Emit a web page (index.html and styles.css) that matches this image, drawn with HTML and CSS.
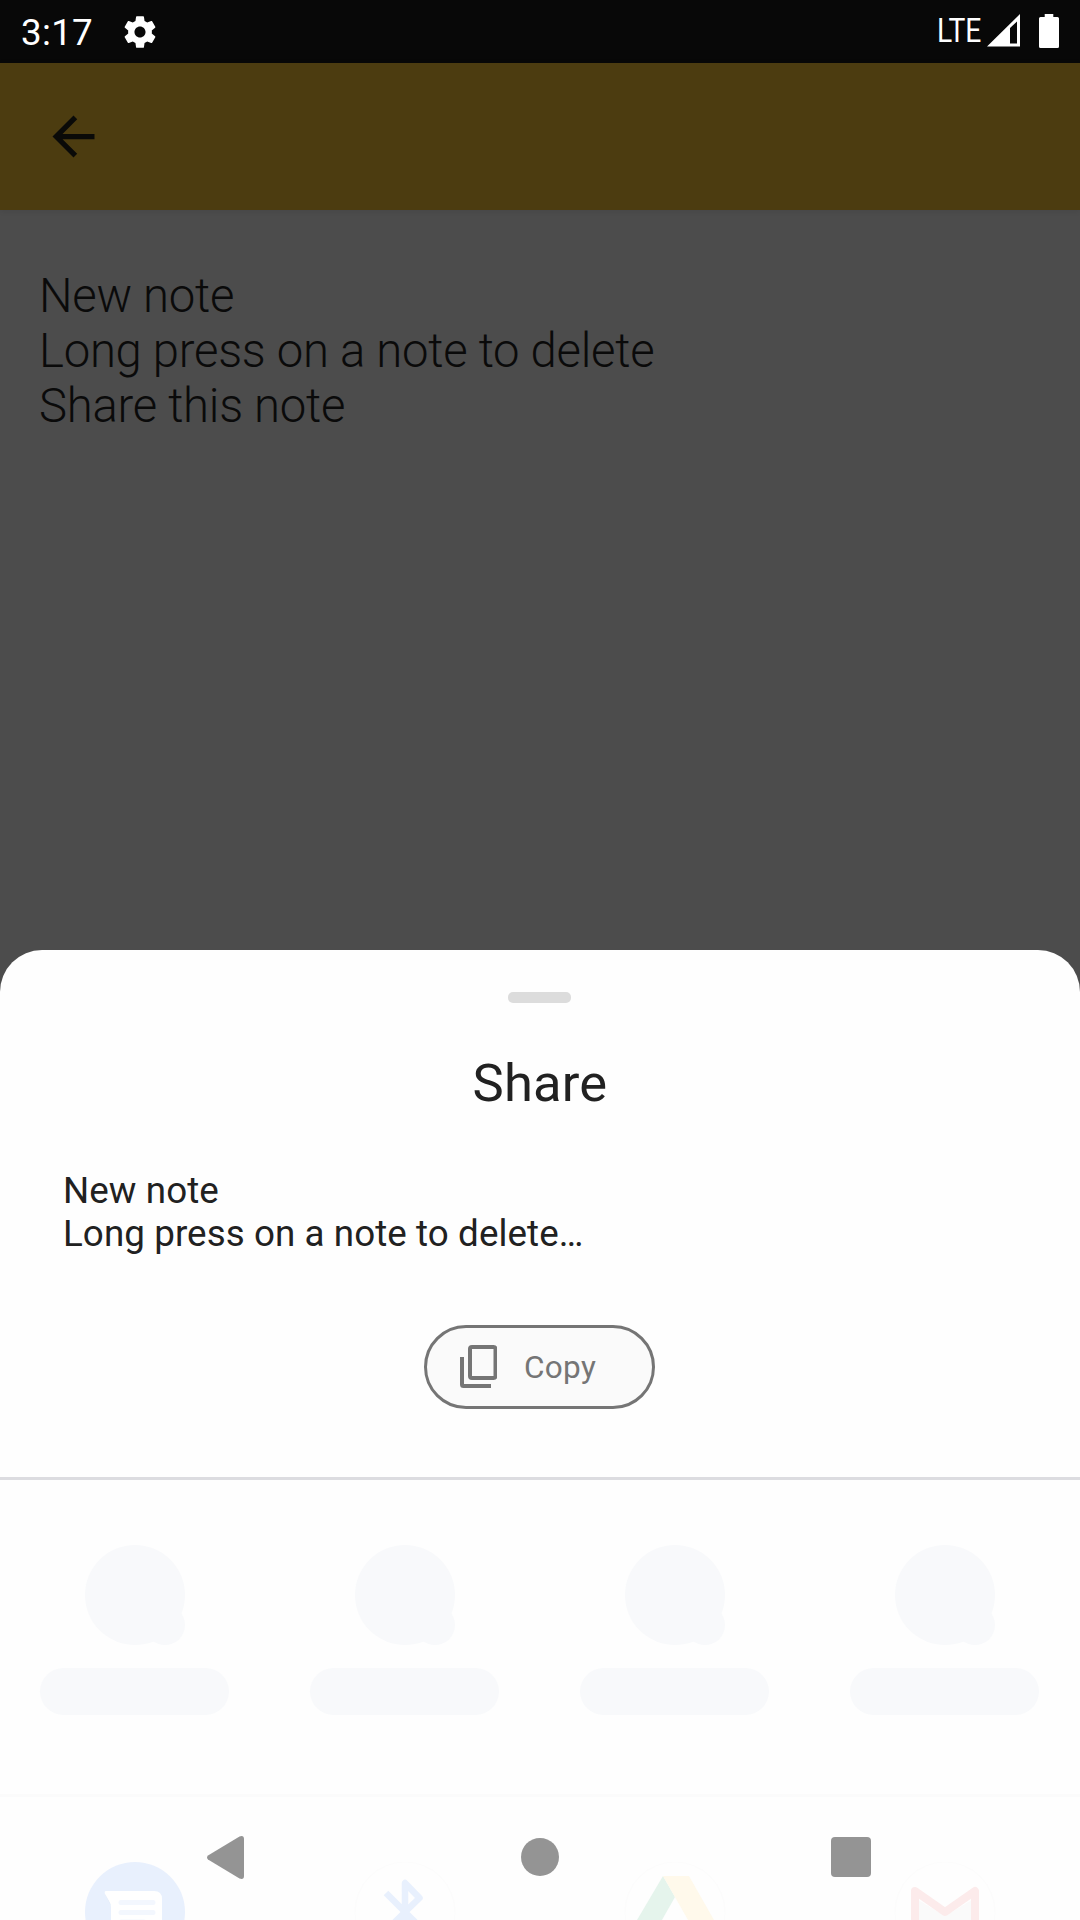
FILE: index.html
```html
<!DOCTYPE html>
<html lang="en">
<head>
<meta charset="utf-8">
<title>Share note</title>
<link rel="stylesheet" href="styles.css">
</head>
<body>
<div class="screen">
  <header class="status">
    <span class="time">3:17</span>
    <svg class="gear" width="38" height="38" viewBox="0 0 24 24"><path fill="#fff" d="M19.43 12.98c.04-.32.07-.64.07-.98s-.03-.66-.07-.98l2.11-1.65c.19-.15.24-.42.12-.64l-2-3.46c-.12-.22-.39-.3-.61-.22l-2.49 1c-.52-.4-1.08-.73-1.69-.98l-.38-2.65C14.46 2.18 14.25 2 14 2h-4c-.25 0-.46.18-.49.42l-.38 2.65c-.61.25-1.17.59-1.69.98l-2.49-1c-.23-.09-.49 0-.61.22l-2 3.46c-.13.22-.07.49.12.64l2.11 1.65c-.04.32-.07.65-.07.98s.03.66.07.98l-2.11 1.65c-.19.15-.24.42-.12.64l2 3.46c.12.22.39.3.61.22l2.49-1c.52.4 1.08.73 1.69.98l.38 2.65c.03.24.24.42.49.42h4c.25 0 .46-.18.49-.42l.38-2.65c.61-.25 1.17-.59 1.69-.98l2.49 1c.23.09.49 0 .61-.22l2-3.46c.12-.22.07-.49-.12-.64l-2.11-1.65zM12 15.5c-1.93 0-3.5-1.57-3.5-3.5s1.57-3.5 3.5-3.5 3.5 1.57 3.5 3.5-1.57 3.5-3.5 3.5z"/></svg>
    <span class="lte">LTE</span>
    <svg class="signal" width="33" height="33" viewBox="0 0 33 33"><path fill="#fff" fill-rule="evenodd" d="M0 32.500 33 0V32.500zM23 14V29.500H30V7.500z"/></svg>
    <svg class="battery" width="20" height="34" viewBox="0 0 20 34"><path fill="#fff" d="M5.700 0H14.300V3H18.500Q20 3 20 4.500V32.500Q20 34 18.500 34H1.500Q0 34 0 32.500V4.500Q0 3 1.500 3H5.700z"/></svg>
  </header>
  <div class="appbar">
    <svg width="63" height="63" viewBox="0 0 24 24"><path fill="#0a0a08" d="M20 11H7.830l5.590-5.590L12 4l-8 8 8 8 1.410-1.410L7.830 13H20v-2z"/></svg>
  </div>
  <main class="note">New note<br>Long press on a note to delete<br>Share this note</main>

  <section class="sheet">
    <div class="handle"></div>
    <h1 class="title">Share</h1>
    <p class="preview">New note<br>Long press on a note to delete…</p>
    <div class="actions">
      <button class="chip">
        <svg width="37" height="43" viewBox="0 0 37 43"><g fill="none" stroke="#757575" stroke-width="4"><rect x="10" y="2" width="25.500" height="31" rx="2"/><path d="M2 12V39.500Q2 41 3.500 41H31"/></g></svg>
        <span>Copy</span>
      </button>
    </div>
    <div class="targets">
      <div class="target"><svg width="100" height="100"><circle cx="50" cy="50" r="50"/><circle cx="80" cy="80" r="20"/></svg><span class="pill"></span></div>
      <div class="target"><svg width="100" height="100"><circle cx="50" cy="50" r="50"/><circle cx="80" cy="80" r="20"/></svg><span class="pill"></span></div>
      <div class="target"><svg width="100" height="100"><circle cx="50" cy="50" r="50"/><circle cx="80" cy="80" r="20"/></svg><span class="pill"></span></div>
      <div class="target"><svg width="100" height="100"><circle cx="50" cy="50" r="50"/><circle cx="80" cy="80" r="20"/></svg><span class="pill"></span></div>
    </div>
    <div class="apps">
      <svg width="102" height="58" viewBox="0 0 102 58">
        <circle cx="51" cy="50" r="50" fill="#e8f0fd"/>
        <path fill="#dfe9f8" d="M21 32 27 44V58H33V34z"/>
        <path fill="#fff" d="M22 29H70Q78 29 78 37V58H27V45Q27 42 25 39L21 32Q20 29 22 29z"/>
        <path stroke="#f3f7fe" stroke-width="5" stroke-linecap="round" d="M37 40.500H69M37 50.500H69M37 60H60"/>
      </svg>
      <svg width="102" height="58" viewBox="0 0 102 58">
        <circle cx="51" cy="50" r="50" fill="#fefefe" stroke="#fcfcfc"/>
        <path fill="none" stroke="#e8f0fd" stroke-width="6.500" stroke-linejoin="round" d="M32 31 51 50 65.500 36 51 21V60M51 50 37 64M51 50 65 64"/>
      </svg>
      <svg width="102" height="58" viewBox="0 0 102 58">
        <circle cx="51" cy="50" r="50" fill="#fefefe" stroke="#fcfcfc"/>
        <path fill="#e5f4ec" d="M39 14 51 35 38 58H13z"/>
        <path fill="#fff9eb" d="M39 14H65L90 58H64z"/>
      </svg>
      <svg width="102" height="58" viewBox="0 0 102 58">
        <circle cx="51" cy="50" r="50" fill="#fefefe" stroke="#fcfcfc"/>
        <path fill="#fafafa" d="M24 38 51 54 78 38V58H24z"/>
        <path fill="none" stroke="#fcebeb" stroke-width="8" stroke-linejoin="round" stroke-linecap="round" d="M21 62V29L51 50 81 29V62"/>
      </svg>
    </div>
  </section>

  <nav class="navbar">
    <svg class="back" width="37" height="43" viewBox="0 0 37 43"><path fill="#949494" d="M1 19.500 32.500.500Q37-1 37 3V40Q37 44 32.500 42.500L1 23.500Q-1 21.500 1 19.500z"/></svg>
    <span class="home"></span>
    <span class="recent"></span>
  </nav>
</div>
</body>
</html>
```
FILE: styles.css
```css
* { box-sizing: border-box; }
body { margin: 0; font-family: Roboto, sans-serif; background: #4c4c4c; }
.screen { position: relative; width: 1080px; height: 1920px; overflow: hidden; display: flex; flex-direction: column; }
svg { display: block; flex: none; }

.status { height: 63px; background: #080808; color: #fff; display: flex; align-items: flex-start; padding: 0 21px; }
.time { font-size: 36.750px; line-height: 43px; padding-top: 11px; width: 100px; letter-spacing: .3px; }
.gear { margin-top: 13px; }
.lte { margin-left: auto; padding-top: 12px; width: 48px; font-size: 32.500px; line-height: 38px; transform: scaleX(.87); transform-origin: left; }
.signal { margin: 14px 19px 0 2px; }
.battery { margin-top: 14px; }

.appbar { height: 147px; background: #4c3c10; display: flex; align-items: center; padding-left: 42px; box-shadow: 0 1px 6px rgba(0, 0, 0, .09); }
.note { padding: 59px 39px; font-size: 47.250px; font-weight: 300; line-height: 55px; letter-spacing: -.26px; color: #0a0a0a; }

.sheet { position: absolute; left: 0; right: 0; bottom: 0; height: 970px; padding-top: 42px; display: flex; flex-direction: column; background: #fefefe; border-radius: 42px 42px 0 0; color: #212121; overflow: hidden; }
.handle { width: 63px; height: 11px; margin-left: 508px; border-radius: 5px; background: #dcdcdc; }
.title { margin: 49px 0 0; font-size: 52.500px; font-weight: 400; line-height: 62px; letter-spacing: .2px; text-align: center; }
.preview { margin: 55px 63px 0; font-size: 36.750px; line-height: 43px; letter-spacing: .08px; }
.actions { height: 225px; padding: 70px 0 0 424px; border-bottom: 3px solid #dcdce0; }
.chip { width: 231px; height: 84px; border: 3px solid #757575; border-radius: 42px; background: #fafafa; color: #757575; font: 400 31.500px/38px Roboto, sans-serif; letter-spacing: .3px; display: flex; align-items: center; gap: 27px; padding: 0 0 0 33px; }
.chip svg { margin-bottom: 2px; }
.chip span { padding-top: 2px; }
.targets { height: 314px; padding-top: 65px; display: grid; grid-template-columns: repeat(4, 1fr); }
.target { display: flex; flex-direction: column; align-items: center; gap: 23px; fill: #f8f9fb; }
.pill { width: 189px; height: 47px; margin-right: 1px; border-radius: 24px; background: #f8f9fb; }
.apps { flex: 1; border-top: 3px solid #fbfbfb; padding-top: 65px; display: grid; grid-template-columns: repeat(4, 1fr); justify-items: center; }

.navbar { position: absolute; left: 0; right: 0; bottom: 0; height: 126px; padding: 0 209px 0 207px; display: flex; align-items: center; justify-content: space-between; }
.home { width: 38px; height: 38px; border-radius: 50%; background: #949494; margin-left: 5px; }
.recent { width: 40px; height: 40px; border-radius: 4px; background: #949494; }
```
